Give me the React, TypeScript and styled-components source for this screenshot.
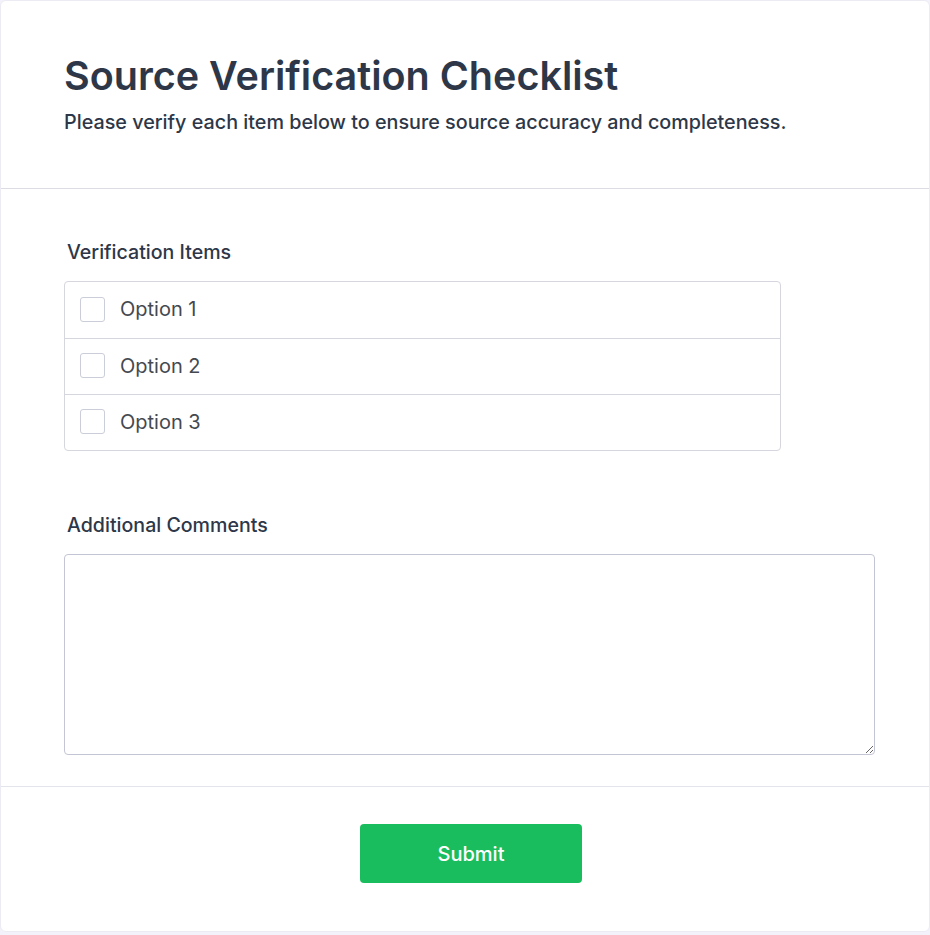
import React, { useState } from 'react';
import styled, { createGlobalStyle } from 'styled-components';

const GlobalStyle = createGlobalStyle`
  html, body {
    margin: 0;
    padding: 0;
    background-color: #f3f2fa;
    font-family: Inter, "Noto Sans", sans-serif;
  }
  * {
    box-sizing: border-box;
  }
`;

const Card = styled.div`
  width: 930px;
  min-height: 932px;
  background-color: #ffffff;
  border: 1px solid #ecebf3;
  border-radius: 6px;
  display: flex;
  flex-direction: column;
`;

const Header = styled.header`
  height: 188px;
  padding: 51px 63px 0;
  border-bottom: 1px solid #dcdce5;
`;

const Title = styled.h1`
  margin: 0;
  font-size: 39.5px;
  line-height: 48px;
  font-weight: 600;
  color: #2d3748;
`;

const Subtitle = styled.p`
  margin: 8px 0 0;
  font-size: 19.75px;
  line-height: 28px;
  font-weight: 500;
  color: #2d3748;
`;

const Body = styled.div`
  padding: 51px 54px 31px 63px;
  border-bottom: 1px solid #e4e4ec;
  display: flex;
  flex-direction: column;
  gap: 62px;
`;

const Field = styled.div`
  display: flex;
  flex-direction: column;
`;

const Label = styled.label`
  display: block;
  padding-left: 3px;
  margin-bottom: 17px;
  font-size: 19.6px;
  line-height: 24px;
  font-weight: 500;
  color: #2d3748;
`;

const OptionList = styled.div`
  width: 717px;
  border: 1px solid #d6d6de;
  border-radius: 4px;
`;

const OptionRow = styled.label`
  display: flex;
  align-items: center;
  gap: 15px;
  height: 56px;
  padding: 0 15px;
  cursor: pointer;
  & + & {
    border-top: 1px solid #d6d6de;
  }
`;

const Box = styled.span<{ $checked: boolean }>`
  width: 25px;
  height: 25px;
  margin-top: -2px;
  border: 1px solid #cbcdd8;
  border-radius: 3px;
  display: flex;
  align-items: center;
  justify-content: center;
  background-color: ${(p) => (p.$checked ? '#19bd5c' : '#ffffff')};
  border-color: ${(p) => (p.$checked ? '#19bd5c' : '#cbcdd8')};
`;

const OptionText = styled.span`
  font-size: 20px;
  line-height: 24px;
  margin-top: -2px;
  color: #45494f;
`;

const TextArea = styled.textarea`
  width: 811px;
  height: 201px;
  border: 1px solid #c4c5d4;
  border-radius: 4px;
  padding: 12px;
  font-family: inherit;
  font-size: 16px;
  color: #2d3748;
  background: #ffffff;
  outline: none;
`;

const Footer = styled.div`
  display: flex;
  justify-content: center;
  padding: 37px 0 48px 12px;
`;

const SubmitButton = styled.button`
  width: 222px;
  height: 59px;
  border: none;
  border-radius: 4px;
  background-color: #1abd5d;
  color: #ffffff;
  font-family: inherit;
  font-size: 20px;
  font-weight: 500;
  cursor: pointer;
  &:hover {
    background-color: #16a852;
  }
`;

const options = ['Option 1', 'Option 2', 'Option 3'];

const App: React.FC = () => {
  const [checked, setChecked] = useState<boolean[]>([false, false, false]);
  const [comments, setComments] = useState('');

  const toggle = (i: number) => {
    setChecked(checked.map((c, j) => (j === i ? !c : c)));
  };

  return (
    <>
      <GlobalStyle />
      <Card>
        <Header>
          <Title>Source Verification Checklist</Title>
          <Subtitle>Please verify each item below to ensure source accuracy and completeness.</Subtitle>
        </Header>

        <Body>
          <Field>
            <Label>Verification Items</Label>
            <OptionList>
              {options.map((opt, i) => (
                <OptionRow key={opt} onClick={() => toggle(i)}>
                  <Box $checked={checked[i]}>
                    {checked[i] && (
                      <svg width="14" height="14" viewBox="0 0 24 24" fill="none" stroke="#fff" strokeWidth="3">
                        <path d="M4 12l5 5L20 6" />
                      </svg>
                    )}
                  </Box>
                  <OptionText>{opt}</OptionText>
                </OptionRow>
              ))}
            </OptionList>
          </Field>

          <Field>
            <Label htmlFor="comments">Additional Comments</Label>
            <TextArea id="comments" value={comments} onChange={(e) => setComments(e.target.value)} />
          </Field>
        </Body>

        <Footer>
          <SubmitButton type="button">Submit</SubmitButton>
        </Footer>
      </Card>
    </>
  );
};

export default App;
